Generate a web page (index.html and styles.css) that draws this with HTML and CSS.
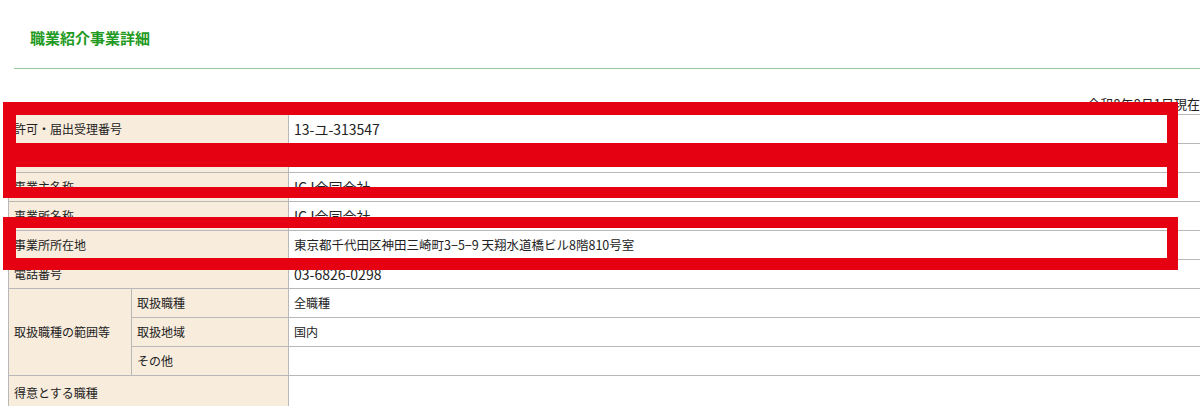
FILE: index.html
```html
<!DOCTYPE html>
<html lang="ja">
<head>
<meta charset="utf-8">
<title>職業紹介事業詳細</title>
<link rel="stylesheet" href="styles.css">
</head>
<body>
<div class="page">
  <div class="header">
    <h1 class="title">職業紹介事業詳細</h1>
  </div>
  <div class="date">令和8年8月1日現在</div>
  <table class="detail">
    <colgroup>
      <col class="c-group">
      <col class="c-sub">
      <col class="c-value">
    </colgroup>
    <tr class="r-lg">
      <th colspan="2">許可・届出受理番号</th>
      <td>13-ユ-313547</td>
    </tr>
    <tr>
      <th colspan="2"></th>
      <td></td>
    </tr>
    <tr class="r-lg">
      <th colspan="2">事業主名称</th>
      <td>ICJ合同会社</td>
    </tr>
    <tr class="r-lg">
      <th colspan="2">事業所名称</th>
      <td>ICJ合同会社</td>
    </tr>
    <tr class="r-md">
      <th colspan="2">事業所所在地</th>
      <td>東京都千代田区神田三崎町3−5−9 天翔水道橋ビル8階810号室</td>
    </tr>
    <tr class="r-lg">
      <th colspan="2">電話番号</th>
      <td>03-6826-0298</td>
    </tr>
    <tr>
      <th rowspan="3">取扱職種の範囲等</th>
      <th>取扱職種</th>
      <td>全職種</td>
    </tr>
    <tr>
      <th>取扱地域</th>
      <td>国内</td>
    </tr>
    <tr>
      <th>その他</th>
      <td></td>
    </tr>
    <tr class="r-last">
      <th colspan="2">得意とする職種</th>
      <td></td>
    </tr>
  </table>
</div>
<div class="mark mark-a"></div>
<div class="mark-band"></div>
<div class="mark mark-b"></div>
</body>
</html>
```

FILE: styles.css
```css
html, body {
  margin: 0;
  padding: 0;
  overflow: hidden;
  background: #ffffff;
}
body {
  position: relative;
  font-family: "Noto Sans CJK JP", "Noto Sans", sans-serif;
  color: #222222;
  width: 1200px;
  height: 406px;
}
.page {
  padding-left: 8px;
  width: 1200px;
}
.header {
  margin-left: 6px;
  border-bottom: 1px solid #9cc79c;
  padding: 28px 0 20px 16px;
}
.title {
  margin: 0;
  font-size: 15px;
  line-height: 20px;
  font-weight: bold;
  color: #1f9a22;
}
.date {
  text-align: right;
  padding: 27px 8px 0 0;
  font-size: 13px;
  line-height: 16px;
  height: 18px;
  color: #222;
}
.detail {
  border-collapse: collapse;
  width: 1200px;
  table-layout: fixed;
}
.c-group {
  width: 123px;
}
.c-sub {
  width: 157px;
}
.detail th, .detail td {
  border: 1px solid #b8b8b8;
  height: 28px;
  padding: 0 5px;
  font-size: 12px;
  font-weight: normal;
  text-align: left;
  vertical-align: middle;
  line-height: 16px;
}
.detail th {
  background: #f8ecdc;
}
.detail td {
  background: #ffffff;
}
.detail tr.r-lg td {
  font-size: 14px;
}
.detail tr.r-md td {
  font-size: 12.5px;
}
.detail tr.r-last th, .detail tr.r-last td {
  height: 34px;
}
.mark {
  position: absolute;
  left: 3px;
  width: 1151px;
  border-style: solid;
  border-color: #e50012;
}
.mark-a {
  top: 102px;
  height: 72px;
  border-width: 13px 11px 11px 13px;
}
.mark-band {
  position: absolute;
  left: 3px;
  top: 143px;
  width: 1175px;
  height: 24px;
  background: #e50012;
}
.mark-b {
  top: 217px;
  height: 30px;
  border-width: 11px 11px 12px 13px;
}
```
